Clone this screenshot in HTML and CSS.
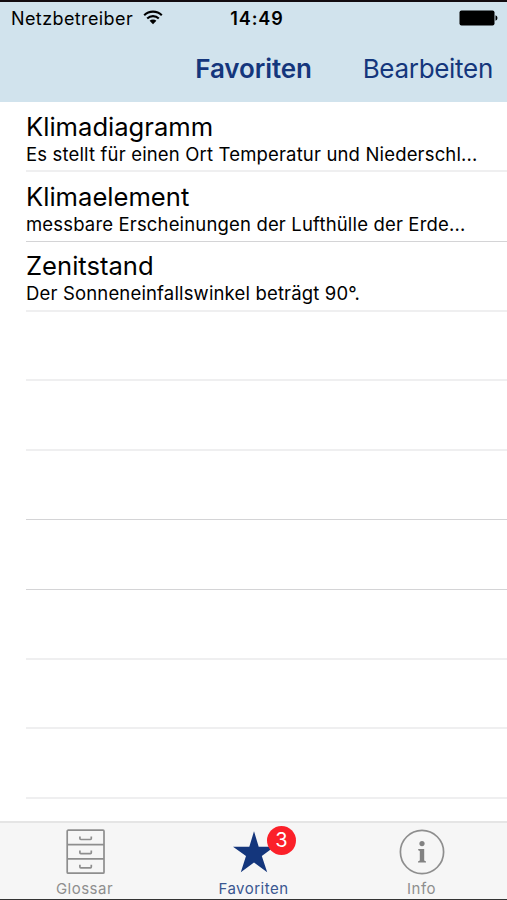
FILE: index.html
```html
<!DOCTYPE html>
<html lang="de">
<head>
  <meta charset="UTF-8">
  <meta name="viewport" content="width=device-width, initial-scale=1.0">
  <title>Favoriten</title>
  <link rel="stylesheet" href="styles.css">
</head>
<body>
  <div class="app">
    <header class="header">
      <div class="status-bar">
        <div class="carrier">
          <span>Netzbetreiber</span>
          <svg class="wifi" viewBox="0 0 20 15" width="20" height="15">
            <path d="M1.2 5.2a12.6 12.6 0 0 1 17.6 0M4.2 8.5a8.3 8.3 0 0 1 11.6 0" fill="none" stroke="#000" stroke-width="2.1"/>
            <path d="M10 14.2L6.6 10.8a4.8 4.8 0 0 1 6.8 0z"/>
          </svg>
        </div>
        <span class="clock">14:49</span>
        <svg class="battery" viewBox="0 0 39 16" width="39" height="16">
          <rect x="0.5" y="0.5" width="35" height="15" rx="2"/>
          <path d="M36.5 5.2q2 .6 2 2.8t-2 2.8z"/>
        </svg>
      </div>
      <nav class="nav-bar">
        <h1 class="nav-title">Favoriten</h1>
        <a class="nav-edit">Bearbeiten</a>
      </nav>
    </header>

    <ul class="list">
      <li class="row soft">
        <div class="row-title">Klimadiagramm</div>
        <div class="row-text">Es stellt für einen Ort Temperatur und Niederschl...</div>
      </li>
      <li class="row">
        <div class="row-title">Klimaelement</div>
        <div class="row-text">messbare Erscheinungen der Lufthülle der Erde...</div>
      </li>
      <li class="row soft">
        <div class="row-title">Zenitstand</div>
        <div class="row-text">Der Sonneneinfallswinkel beträgt 90°.</div>
      </li>
      <li class="row soft"></li>
      <li class="row soft"></li>
      <li class="row"></li>
      <li class="row"></li>
      <li class="row soft"></li>
      <li class="row soft"></li>
      <li class="row soft"></li>
    </ul>

    <footer class="tab-bar">
      <a class="tab">
        <svg class="tab-icon" viewBox="0 0 46 46" width="46" height="46" fill="none" stroke="#8e8e8e" stroke-width="1.7">
          <rect x="5.2" y="1.2" width="36.8" height="43" rx="1"/>
          <path d="M5.2 15.6h36.8M5.2 29.8h36.8"/>
          <path d="M17.9 7.4v2.2q0 .9.9.9h9.6q.9 0 .9-.9V7.4M17.9 21.6v2.2q0 .9.9.9h9.6q.9 0 .9-.9v-2.2M17.9 35.8v2.2q0 .9.9.9h9.6q.9 0 .9-.9v-2.2"/>
        </svg>
        <span class="tab-label">Glossar</span>
      </a>
      <a class="tab active">
        <svg class="tab-icon" viewBox="0 0 46 46" width="46" height="46">
          <path fill="#14367c" d="M23 2.2L27.7 17.7H43.4L30.8 27.1L36.2 43.2L23 33.4L9.8 43.2L15 27.1L2 17.7H18.3z"/>
        </svg>
        <span class="badge">3</span>
        <span class="tab-label">Favoriten</span>
      </a>
      <a class="tab info">
        <svg class="tab-icon" viewBox="0 0 46 46" width="46" height="46" fill="#828282">
          <circle cx="23" cy="23" r="21.6" fill="none" stroke="#8e8e8e" stroke-width="1.7"/>
          <circle cx="23" cy="14.6" r="2.6"/>
          <path d="M19.2 20h6v11.6l1.8.8v1.2h-8v-1.2l1.8-.8v-9.7l-1.6-.6z"/>
        </svg>
        <span class="tab-label">Info</span>
      </a>
    </footer>
  </div>
</body>
</html>
```
FILE: styles.css
```css
* {
  box-sizing: border-box;
}

body {
  margin: 0;
  font-family: Inter, "Liberation Sans", sans-serif;
  background: #fff;
  color: #000;
}

.app {
  display: flex;
  flex-direction: column;
  height: 900px;
  overflow: hidden;
  border-top: 2px solid #120c10;
  border-bottom: 1px solid #333;
}

/* Header */
.header {
  flex: none;
  height: 100px;
  background: #d1e3ed;
}

.status-bar {
  display: grid;
  grid-template-columns: 1fr auto 1fr;
  align-items: center;
  height: 32px;
  padding: 0 9px 0 11px;
}

.carrier {
  display: flex;
  align-items: center;
  gap: 10px;
  padding-top: 1px;
  font-size: 18px;
  line-height: 31px;
  letter-spacing: 0.4px;
}

.wifi {
  margin-top: -3px;
}

.clock {
  padding-left: 5px;
  font-size: 18px;
  font-weight: 600;
  letter-spacing: 0.9px;
}

.battery {
  justify-self: end;
}

.nav-bar {
  display: grid;
  grid-template-columns: 1fr auto 1fr;
  align-items: center;
  height: 68px;
  padding: 0 14px;
  color: #14367c;
}

.nav-title {
  grid-column: 2;
  margin: 0;
  font-size: 26px;
  font-weight: 600;
  letter-spacing: -0.1px;
}

.nav-edit {
  justify-self: end;
  font-size: 26px;
  letter-spacing: -0.3px;
}

/* List */
.list {
  flex: 1;
  min-height: 0;
  margin: 0;
  padding: 0.8px 0 0;
  overflow: hidden;
  list-style: none;
}

.row {
  height: 69.6px;
  margin-left: 26px;
  padding-top: 9.4px;
  border-bottom: 1px solid #d4d4d6;
  white-space: nowrap;
}

.row.soft {
  border-bottom: 2px solid #efeff0;
}

.row-title {
  font-size: 25.6px;
  line-height: 30px;
}

.row-text {
  font-size: 18.5px;
  line-height: 25.5px;
  letter-spacing: 0.16px;
}

/* Tab bar */
.tab-bar {
  display: grid;
  grid-template-columns: repeat(3, 1fr);
  flex: none;
  height: 78px;
  border-top: 2px solid #e5e5e5;
  background: #f6f6f6;
}

.tab {
  position: relative;
  display: flex;
  flex-direction: column;
  align-items: center;
  padding-top: 6px;
  color: #8e8e8e;
}

.info {
  padding-right: 2px;
}

.tab-label {
  margin-top: 4px;
  font-size: 15px;
  line-height: 20px;
  letter-spacing: 0.5px;
}

.active {
  color: #3a5791;
}

.badge {
  position: absolute;
  top: 3px;
  left: 98px;
  width: 29px;
  height: 29px;
  border-radius: 50%;
  background: #fb2029;
  color: #fff;
  font-size: 20px;
  line-height: 29px;
  text-align: center;
}
```
